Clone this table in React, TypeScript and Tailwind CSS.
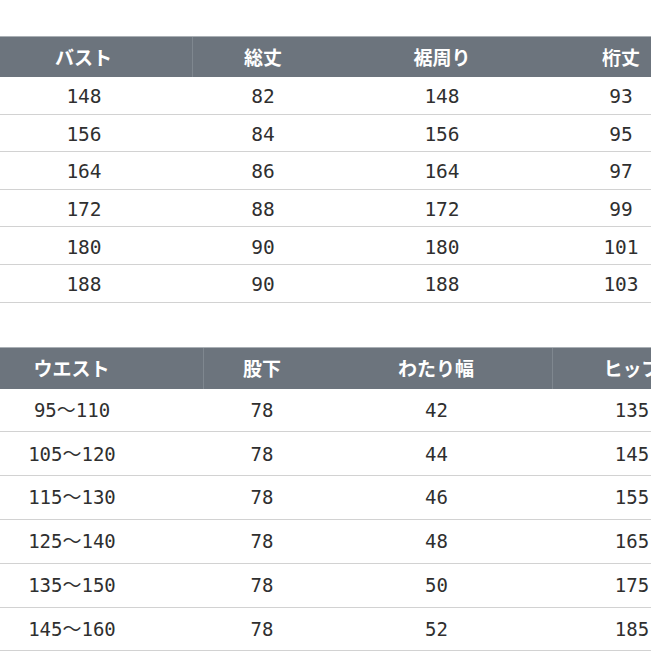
const sizeTable = {
  head: ['バスト', '総丈', '裾周り', '桁丈'],
  rows: [
    ['148', '82', '148', '93'],
    ['156', '84', '156', '95'],
    ['164', '86', '164', '97'],
    ['172', '88', '172', '99'],
    ['180', '90', '180', '101'],
    ['188', '90', '188', '103'],
  ],
};

const pantsTable = {
  head: ['ウエスト', '股下', 'わたり幅', 'ヒップ'],
  rows: [
    ['95～110', '78', '42', '135'],
    ['105～120', '78', '44', '145'],
    ['115～130', '78', '46', '155'],
    ['125～140', '78', '48', '165'],
    ['135～150', '78', '50', '175'],
    ['145～160', '78', '52', '185'],
  ],
};

const jp = "font-['Noto_Sans_CJK_JP','Noto_Sans',sans-serif]";
const mono = "font-['DejaVu_Sans_Mono','Noto_Sans_CJK_JP',monospace]";

export default function App() {
  return (
    <div className="w-[651px] h-[651px] overflow-hidden bg-white pt-[36px]">
      {/* top table */}
      <div className="w-[691px]">
        <div className={`grid grid-cols-[193px_140px_218px_140px] h-[41px] bg-[#6c747d] border-t border-[#aab0b5] text-white text-[19px] font-bold ${jp}`}>
          <div className="flex items-center justify-center pr-[25px] border-r border-[#7f878f]">{sizeTable.head[0]}</div>
          <div className="flex items-center justify-center">{sizeTable.head[1]}</div>
          <div className="flex items-center justify-center">{sizeTable.head[2]}</div>
          <div className="flex items-center justify-center">{sizeTable.head[3]}</div>
        </div>
        {sizeTable.rows.map((r, i) => (
          <div
            key={i}
            className={`grid grid-cols-[193px_140px_218px_140px] h-[37.6px] pt-[3px] border-b border-[#d2d2d2] text-[#2f2f2f] text-[19.5px] ${mono}`}
          >
            <div className="flex items-center justify-center pr-[25px]">{r[0]}</div>
            <div className="flex items-center justify-center">{r[1]}</div>
            <div className="flex items-center justify-center">{r[2]}</div>
            <div className="flex items-center justify-center">{r[3]}</div>
          </div>
        ))}
      </div>

      {/* bottom table */}
      <div className="w-[711px] mt-[44px]">
        <div className={`grid grid-cols-[204px_116px_233px_158px] h-[42px] bg-[#6c747d] border-t border-[#aab0b5] text-white text-[19px] font-bold ${jp}`}>
          <div className="flex items-center justify-center pr-[60px] border-r border-[#7f878f]">{pantsTable.head[0]}</div>
          <div className="flex items-center justify-center">{pantsTable.head[1]}</div>
          <div className="flex items-center justify-center border-r border-[#7f878f]">{pantsTable.head[2]}</div>
          <div className="flex items-center justify-center">{pantsTable.head[3]}</div>
        </div>
        {pantsTable.rows.map((r, i) => (
          <div
            key={i}
            className={`grid grid-cols-[204px_116px_233px_158px] h-[43.8px] border-b border-[#d2d2d2] text-[#2f2f2f] text-[19px] ${mono}`}
          >
            <div className="flex items-center justify-center pr-[60px]">{r[0]}</div>
            <div className="flex items-center justify-center">{r[1]}</div>
            <div className="flex items-center justify-center">{r[2]}</div>
            <div className="flex items-center justify-center">{r[3]}</div>
          </div>
        ))}
      </div>
    </div>
  );
}
